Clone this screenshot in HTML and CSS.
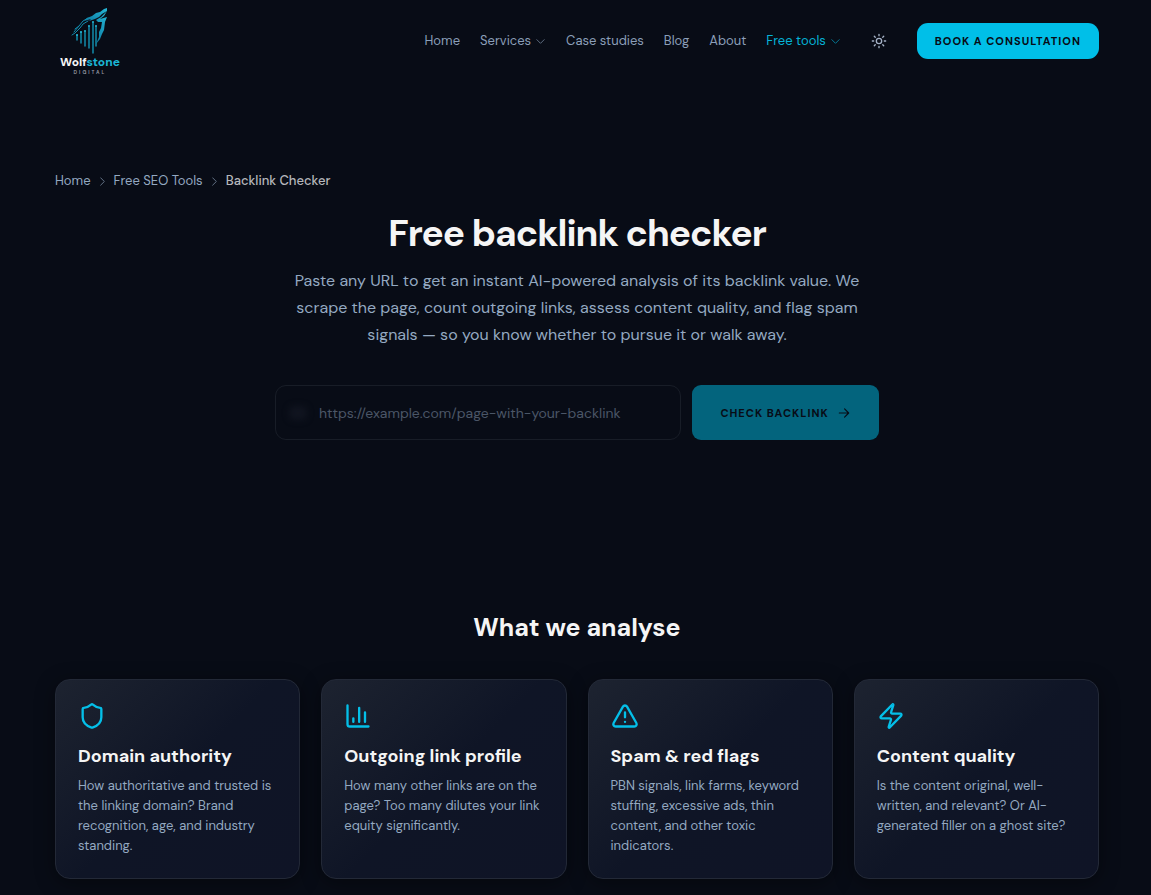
FILE: index.html
```html
<!DOCTYPE html>
<html lang="en">
<head>
    <meta charset="utf-8">
    <meta name="viewport" content="width=device-width, initial-scale=1">
    <title>Free Backlink Checker | Wolfstone Digital</title>
    <link rel="stylesheet" href="styles.css">
</head>
<body>
<header class="header">
    <a href="#" class="logo">
        <svg class="logo-mark" viewBox="0 0 38 46" fill="none" aria-hidden="true">
            <defs>
                <linearGradient id="wolf" x1="1" y1="0" x2="0.2" y2="1">
                    <stop offset="0" stop-color="#27b9d8"/>
                    <stop offset="1" stop-color="#0d7fa5"/>
                </linearGradient>
            </defs>
            <!-- head and muzzle -->
            <path fill="url(#wolf)" d="M36 0 L33 1 L29 4 L25 5 L21 8 L16 10 L13 13 L20 11 L18 13 L24 11 L28 9 L31 6 L36 3 Z"/>
            <path fill="url(#wolf)" d="M36 3 L33 8 L29 11 L36 9 L34 14 L33 22 L31 26 L29 31 L25 36 L28 29 L28 24 L30 20 L31 14 L27 14 L25 12 L30 9 Z"/>
            <path stroke="#128bad" stroke-width="1" d="M17 10 L12 13 L8 18 L3 24 M17 13 L12 16 L9 20 L4 25 L1 27 M8 18 L4 21"/>
            <!-- bars -->
            <path stroke="#159fc2" stroke-width="1.3" d="M6 27 V32 M10 24 V35 M14 24 V38 M18 19 V40 M22 15 V45 M25 19 V38"/>
            <g fill="#22bad9">
                <circle cx="6" cy="27" r="1"/>
                <circle cx="10" cy="24" r="1"/>
                <circle cx="14" cy="23" r="1"/>
                <circle cx="18" cy="18" r="1"/>
                <circle cx="22" cy="14" r="1"/>
                <circle cx="25" cy="18" r="1"/>
            </g>
        </svg>
        <span class="logo-name">Wolf<span class="logo-accent">stone</span></span>
        <span class="logo-sub">DIGITAL</span>
    </a>
    <div class="header-right">
        <nav class="nav">
            <a href="#">Home</a>
            <a href="#">Services <svg class="chevron" viewBox="0 0 24 24"><path d="m4 8 8 8 8-8"/></svg></a>
            <a href="#">Case studies</a>
            <a href="#">Blog</a>
            <a href="#">About</a>
            <a href="#" class="active">Free tools <svg class="chevron" viewBox="0 0 24 24"><path d="m4 8 8 8 8-8"/></svg></a>
        </nav>
        <button type="button" class="theme-toggle" aria-label="Toggle theme">
            <svg viewBox="0 0 24 24"><circle cx="12" cy="12" r="4"/><path d="M12 2v2M12 20v2M4.93 4.93l1.41 1.41M17.66 17.66l1.41 1.41M2 12h2M20 12h2M6.34 17.66l-1.41 1.41M19.07 4.93l-1.41 1.41"/></svg>
        </button>
        <a href="#" class="btn">Book a consultation</a>
    </div>
</header>

<main>
    <nav class="breadcrumb" aria-label="Breadcrumb">
        <a href="#">Home</a>
        <svg viewBox="0 0 24 24"><path d="m8 4 8 8-8 8"/></svg>
        <a href="#">Free SEO Tools</a>
        <svg viewBox="0 0 24 24"><path d="m8 4 8 8-8 8"/></svg>
        <span class="current">Backlink Checker</span>
    </nav>

    <section class="hero">
        <h1>Free backlink checker</h1>
        <p>Paste any URL to get an instant AI-powered analysis of its backlink value. We scrape the page, count outgoing links, assess content quality, and flag spam signals — so you know whether to pursue it or walk away.</p>
        <form class="check-form">
            <div class="field">
                <span class="field-icon"></span>
                <input type="url" aria-label="Page URL" placeholder="https://example.com/page-with-your-backlink">
            </div>
            <button type="submit" class="check-btn" disabled>
                Check backlink
                <svg viewBox="0 0 24 24"><path d="M4 12h16M13 5l7 7-7 7"/></svg>
            </button>
        </form>
    </section>

    <section class="analyse">
        <h2>What we analyse</h2>
        <div class="cards">
            <article class="card">
                <svg viewBox="0 0 24 24"><path d="M20 13c0 5-3.500 7.500-7.660 8.950a1 1 0 0 1-.67-.01C7.500 20.500 4 18 4 13V6a1 1 0 0 1 1-1c2 0 4.500-1.200 6.240-2.720a1.170 1.170 0 0 1 1.520 0C14.510 3.810 17 5 19 5a1 1 0 0 1 1 1z"/></svg>
                <h3>Domain authority</h3>
                <p>How authoritative and trusted is the linking domain? Brand recognition, age, and industry standing.</p>
            </article>
            <article class="card">
                <svg viewBox="0 0 24 24"><path d="M3 3v16a2 2 0 0 0 2 2h16M18 17V9M13 17V5M8 17v-3"/></svg>
                <h3>Outgoing link profile</h3>
                <p>How many other links are on the page? Too many dilutes your link equity significantly.</p>
            </article>
            <article class="card">
                <svg viewBox="0 0 24 24"><path d="m21.730 18-8-14a2 2 0 0 0-3.480 0l-8 14A2 2 0 0 0 4 21h16a2 2 0 0 0 1.730-3M12 9v4M12 17h.01"/></svg>
                <h3>Spam &amp; red flags</h3>
                <p>PBN signals, link farms, keyword stuffing, excessive ads, thin content, and other toxic indicators.</p>
            </article>
            <article class="card">
                <svg viewBox="0 0 24 24"><path d="M4 14a1 1 0 0 1-.78-1.630l9.900-10.200a.5.5 0 0 1 .86.460l-1.920 6.020A1 1 0 0 0 13 10h7a1 1 0 0 1 .78 1.630l-9.900 10.200a.5.5 0 0 1-.86-.460l1.920-6.020A1 1 0 0 0 11 14z"/></svg>
                <h3>Content quality</h3>
                <p>Is the content original, well-written, and relevant? Or AI-generated filler on a ghost site?</p>
            </article>
        </div>
    </section>
</main>
</body>
</html>
```

FILE: styles.css
```css
* {
    box-sizing: border-box;
}

body {
    margin: 0;
    background: #080c16;
    color: #94a9c1;
    font-family: "DM Sans", Inter, "Liberation Sans", sans-serif;
    font-size: 13px;
}

a {
    color: inherit;
    text-decoration: none;
}

h1, h2, h3, p {
    margin: 0;
}

svg {
    flex: none;
    fill: none;
    stroke: currentColor;
    stroke-width: 2;
    stroke-linecap: round;
    stroke-linejoin: round;
}

.header {
    display: flex;
    align-items: center;
    justify-content: space-between;
    height: 82px;
    padding: 0 52px 0 60px;
}

.logo {
    display: flex;
    flex-direction: column;
    align-items: center;
}

.logo-mark {
    width: 38px;
    height: 46px;
    stroke: none;
}

.logo-name {
    color: #f5f5f5;
    font-size: 12px;
    font-weight: 800;
    line-height: 17px;
}

.logo-accent {
    color: #1bb5d3;
}

.logo-sub {
    color: #9a9fa8;
    font-size: 5px;
    font-weight: 600;
    line-height: 3px;
    letter-spacing: 2px;
}

.header-right {
    display: flex;
    align-items: center;
}

.nav {
    display: flex;
    gap: 20px;
    color: #8b9fb9;
}

.nav a {
    display: flex;
    align-items: center;
    gap: 4px;
    line-height: 20px;
}

.nav .active {
    color: #04b4d8;
}

.chevron {
    width: 11px;
    height: 11px;
    opacity: 0.7;
}

.theme-toggle {
    display: flex;
    margin: 0 20px;
    padding: 10px;
    border: 0;
    background: none;
    color: #a5b2c6;
}

.theme-toggle svg {
    width: 16px;
    height: 16px;
}

.btn {
    padding: 0 18px;
    border-radius: 11px;
    background: #00bfe8;
    color: #080c16;
    font-size: 11px;
    font-weight: 700;
    line-height: 36px;
    letter-spacing: 1px;
    text-transform: uppercase;
}

main {
    padding: 89px 52px 16px 55px;
}

.breadcrumb {
    display: flex;
    align-items: center;
    gap: 6px;
    line-height: 20px;
}

.breadcrumb svg {
    width: 11px;
    height: 11px;
    opacity: 0.7;
}

.breadcrumb .current {
    color: #b5b7bb;
    font-weight: 500;
}

.hero {
    max-width: 604px;
    margin: 20px auto 0;
    text-align: center;
}

.hero h1 {
    color: #f5f5f5;
    font-size: 37px;
    font-weight: 700;
    line-height: 44px;
    letter-spacing: -1px;
}

.hero p {
    margin: 12px 0 37px;
    font-size: 16px;
    line-height: 27px;
}

.check-form {
    display: flex;
    gap: 11px;
}

.field {
    display: flex;
    align-items: center;
    flex: 1;
    height: 55px;
    padding: 0 13px;
    border: 1px solid #181d27;
    border-radius: 11px;
}

.field-icon {
    width: 18px;
    height: 14px;
    border-radius: 5px;
    background: #10141f;
    filter: blur(3px);
}

.field input {
    flex: 1;
    min-width: 0;
    padding: 0 0 0 12px;
    border: 0;
    outline: 0;
    background: none;
    color: #f5f5f5;
    font-family: inherit;
    font-size: 14px;
}

.field input::placeholder {
    color: #4b5667;
}

.check-btn {
    display: flex;
    align-items: center;
    justify-content: center;
    gap: 8px;
    width: 187px;
    border: 0;
    border-radius: 9px;
    background: #03647d;
    color: #080c16;
    font-family: inherit;
    font-size: 11px;
    font-weight: 700;
    letter-spacing: 1px;
    text-transform: uppercase;
}

.check-btn svg {
    width: 14px;
    height: 14px;
}

.analyse {
    margin-top: 171px;
}

.analyse h2 {
    color: #f5f5f5;
    font-size: 25px;
    font-weight: 700;
    line-height: 34px;
    text-align: center;
}

.cards {
    display: grid;
    grid-template-columns: repeat(4, 1fr);
    gap: 21px;
    margin-top: 34px;
}

.card {
    padding: 22px;
    border: 1px solid #232937;
    border-radius: 15px;
    background: linear-gradient(135deg, #1d2330 0%, #0f1526 50%, #0f1426 100%);
    box-shadow: 0 4px 20px rgba(0, 0, 0, 0.4);
}

.card svg {
    display: block;
    width: 28px;
    height: 28px;
    color: #04bfe8;
}

.card h3 {
    margin: 13px 0 7px;
    color: #f5f5f5;
    font-size: 18px;
    font-weight: 700;
    line-height: 26px;
}

.card p {
    line-height: 20px;
}
```
